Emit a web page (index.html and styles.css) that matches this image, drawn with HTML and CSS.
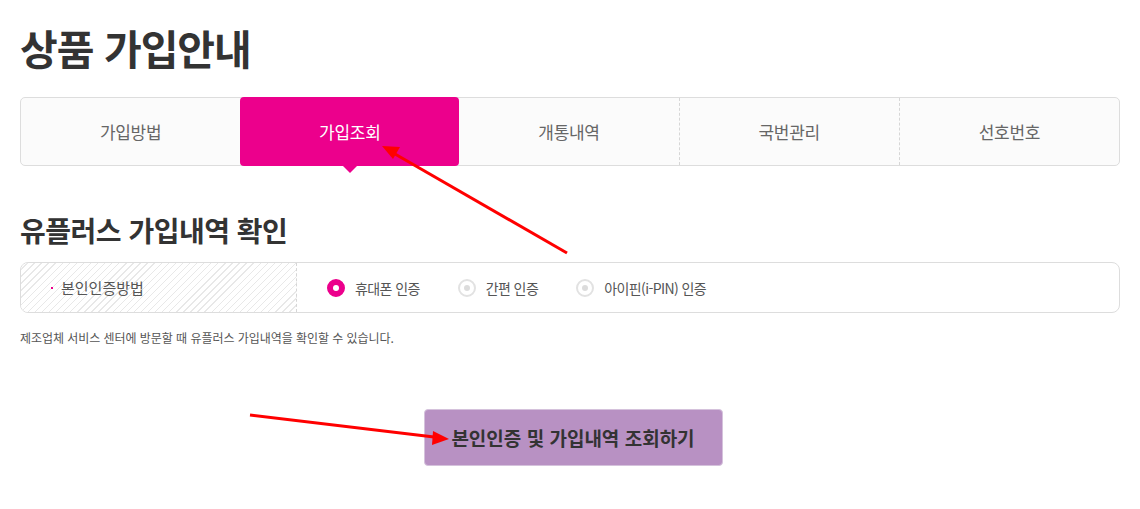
FILE: index.html
```html
<!DOCTYPE html>
<html lang="ko">
<head>
<meta charset="utf-8">
<title>상품 가입안내</title>
<link rel="stylesheet" href="styles.css">
</head>
<body>
<div class="page">
  <h1 class="title">상품 가입안내</h1>
  <ul class="tabs">
    <li class="tab">가입방법</li>
    <li class="tab active">가입조회</li>
    <li class="tab">개통내역</li>
    <li class="tab dashed">국번관리</li>
    <li class="tab dashed">선호번호</li>
  </ul>
  <h2 class="subtitle">유플러스 가입내역 확인</h2>
  <div class="form-row">
    <div class="form-label"><span class="dot"></span>본인인증방법</div>
    <div class="form-options">
      <label class="opt"><span class="radio checked"></span>휴대폰 인증</label>
      <label class="opt"><span class="radio"></span>간편 인증</label>
      <label class="opt"><span class="radio"></span>아이핀(i-PIN) 인증</label>
    </div>
  </div>
  <p class="note">제조업체 서비스 센터에 방문할 때 유플러스 가입내역을 확인할 수 있습니다.</p>
  <div class="btn-wrap">
    <button class="btn">본인인증 및 가입내역 조회하기</button>
  </div>
</div>
<svg class="arrows" width="1140" height="509" viewBox="0 0 1140 509">
  <g stroke="#ff0000" stroke-width="3" fill="#ff0000">
    <line x1="567" y1="253" x2="395" y2="154"/>
    <polygon points="382,146 400,147 393,159" stroke="none"/>
    <line x1="250" y1="415" x2="434" y2="437"/>
    <polygon points="449,439 433,431 432,445" stroke="none"/>
  </g>
</svg>
</body>
</html>
```
FILE: styles.css
```css
* { box-sizing: border-box; }
html, body { margin: 0; padding: 0; background: #fff; }
body {
  font-family: "Noto Sans CJK KR", "Noto Sans", sans-serif;
  color: #333;
  position: relative;
  width: 1140px;
  height: 509px;
  overflow: hidden;
}
.page { padding: 0 20px; }
.title {
  margin: 0;
  padding-top: 17px;
  font-size: 41px;
  line-height: 60px;
  font-weight: 700;
  letter-spacing: -1px;
  color: #333;
}
.tabs {
  list-style: none;
  margin: 20px 0 0;
  padding: 0;
  display: flex;
  height: 69px;
  border: 1px solid #ddd;
  border-radius: 5px;
  background: #fbfbfb;
}
.tab {
  flex: 1;
  display: flex;
  align-items: center;
  justify-content: center;
  font-size: 17px;
  color: #666;
  letter-spacing: -0.3px;
  position: relative;
}
.tab.dashed { border-left: 1px dashed #d6d6d6; }
.tab.active {
  background: #ec008c;
  color: #fff;
  border-radius: 4px;
  margin: -1px 0;
}
.tab.active::after {
  content: "";
  position: absolute;
  left: 50%;
  bottom: -7px;
  margin-left: -7px;
  border-left: 7px solid transparent;
  border-right: 7px solid transparent;
  border-top: 7px solid #ec008c;
}
.subtitle {
  margin: 44px 0 0;
  font-size: 28px;
  line-height: 40px;
  font-weight: 700;
  letter-spacing: -0.5px;
  color: #333;
}
.form-row {
  margin-top: 12px;
  display: flex;
  height: 51px;
  border: 1px solid #ddd;
  border-radius: 8px;
  overflow: hidden;
}
.form-label {
  width: 276px;
  display: flex;
  align-items: center;
  padding-left: 30px;
  font-size: 15px;
  color: #555;
  border-right: 1px dashed #d6d6d6;
  background: repeating-linear-gradient(135deg, #fff 0, #fff 4px, #e8e8e8 4px, #e8e8e8 5px);
  letter-spacing: 0;
}
.dot {
  width: 2px;
  height: 2px;
  background: #ec008c;
  margin-right: 8px;
}
.form-options {
  flex: 1;
  display: flex;
  align-items: center;
  padding-left: 30px;
}
.opt {
  display: flex;
  align-items: center;
  font-size: 14px;
  color: #555;
  letter-spacing: -0.6px;
  margin-right: 38px;
}
.radio {
  width: 18px;
  height: 18px;
  border-radius: 50%;
  border: 2px solid #e2e2e2;
  margin-right: 10px;
  display: flex;
  align-items: center;
  justify-content: center;
  background: #fff;
}
.radio::after {
  content: "";
  width: 6px;
  height: 6px;
  border-radius: 50%;
  background: #dcdcdc;
}
.radio.checked {
  background: #ec008c;
  border-color: #ec008c;
}
.radio.checked::after { background: #fff; }
.note {
  margin: 16px 0 0;
  font-size: 12px;
  line-height: 18px;
  color: #555;
  letter-spacing: -0.05px;
}
.btn-wrap {
  display: flex;
  justify-content: center;
  margin-top: 62px;
  padding-left: 6px;
}
.btn {
  width: 299px;
  height: 57px;
  border: 1px solid #d5c2dc;
  border-radius: 4px;
  background: #b891c3;
  font-family: inherit;
  font-size: 19px;
  font-weight: 700;
  color: #333;
  letter-spacing: 0;
  padding: 0;
}
.arrows {
  position: absolute;
  left: 0;
  top: 0;
  pointer-events: none;
}
```
